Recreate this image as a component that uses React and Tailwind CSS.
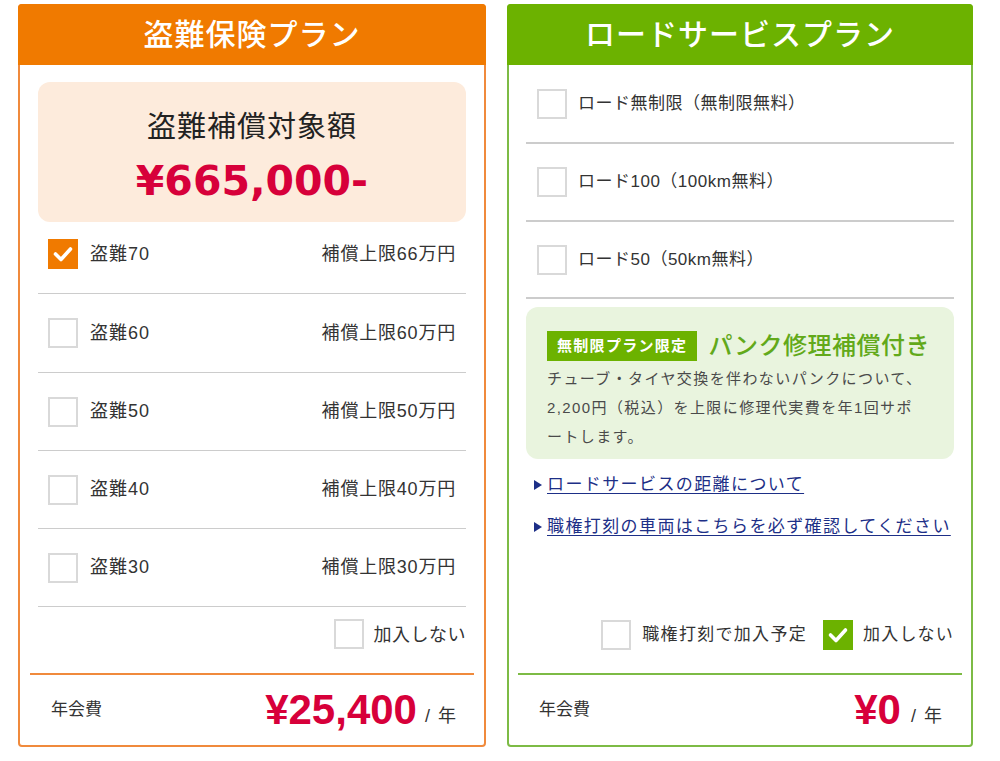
import React from "react";

const FONT = { fontFamily: '"Liberation Sans", "Noto Sans CJK JP", sans-serif' };

function Check({ checked, color }) {
  if (checked) {
    return (
      <span className={`flex h-[30px] w-[30px] shrink-0 items-center justify-center ${color}`}>
        <svg width="22" height="22" viewBox="0 0 22 22" fill="none">
          <path d="M3.5 11 L9 16.5 L18.5 6" stroke="white" strokeWidth="3.6" strokeLinecap="round" strokeLinejoin="round" />
        </svg>
      </span>
    );
  }
  return <span className="block h-[30px] w-[30px] shrink-0 border-2 border-[#d9d9d9] bg-white" />;
}

const theftRows = [
  { name: "盗難70", cap: "補償上限66万円", checked: true, h: "h-[72px] pb-[7px]" },
  { name: "盗難60", cap: "補償上限60万円", h: "h-[79px]" },
  { name: "盗難50", cap: "補償上限50万円", h: "h-[78px]" },
  { name: "盗難40", cap: "補償上限40万円", h: "h-[78px]" },
  { name: "盗難30", cap: "補償上限30万円", h: "h-[78px]" },
];

const roadRows = [
  { t: "ロード無制限（無制限無料）", h: "h-[79px]" },
  { t: "ロード100（100km無料）", h: "h-[78px]" },
  { t: "ロード50（50km無料）", h: "h-[77px]" },
];

export default function App() {
  return (
    <div className="flex h-[761px] w-[1000px] gap-[21px] bg-white pl-[18px] pt-[4px] text-[#333]" style={FONT}>
      {/* Left card */}
      <div className="flex h-[743px] w-[468px] flex-col rounded-[4px] border-2 border-[#f08a3c]">
        <div className="-mx-[2px] -mt-[2px] flex h-[61px] shrink-0 items-center justify-center rounded-t-[4px] bg-[#f07a00] text-[30px] font-medium tracking-[1px] text-white">
          盗難保険プラン
        </div>
        <div className="px-[18px] pt-[17px]">
          <div className="flex h-[140px] flex-col items-center justify-center rounded-[12px] bg-[#fdebdc] pt-[8px]">
            <div className="text-[29px] leading-[40px] tracking-[1px] text-[#222]">盗難補償対象額</div>
            <div className="mt-[10px] text-[41px] font-bold leading-[48px] text-[#d7003a]" style={{ fontFamily: '"DejaVu Sans", sans-serif' }}>
              ¥665,000-
            </div>
          </div>
          {theftRows.map((r) => (
            <div key={r.name} className={`flex items-center border-b border-[#cccccc] pl-[10px] pr-[10px] ${r.h}`}>
              <Check checked={r.checked} color="bg-[#f07a00]" />
              <span className="ml-[12px] text-[18px] tracking-[1px]">{r.name}</span>
              <span className="ml-auto text-[18px] tracking-[0.8px]">{r.cap}</span>
            </div>
          ))}
          <div className="flex h-[66px] items-start justify-end pt-[12px]">
            <Check />
            <span className="ml-[10px] mt-[3px] text-[18px] tracking-[0.5px]">加入しない</span>
          </div>
        </div>
        <div className="mx-[10px] flex flex-1 items-center border-t-2 border-[#f08a3c] pl-[21px] pr-[18px]">
          <span className="text-[17px]">年会費</span>
          <span className="ml-auto text-[42px] font-bold leading-none text-[#d7003a]">¥25,400</span>
          <span className="ml-[8px] mt-[12px] text-[18px]">/</span>
          <span className="ml-[8px] mt-[12px] text-[18px]">年</span>
        </div>
      </div>

      {/* Right card */}
      <div className="flex h-[743px] w-[466px] flex-col rounded-[4px] border-2 border-[#7dbb45]">
        <div className="-mx-[2px] -mt-[2px] flex h-[61px] shrink-0 items-center justify-center rounded-t-[4px] bg-[#6cb200] text-[30px] font-medium tracking-[1px] text-white">
          ロードサービスプラン
        </div>
        <div className="px-[17px]">
          {roadRows.map((r) => (
            <div key={r.t} className={`flex items-center border-b-2 border-[#cccccc] pl-[11px] ${r.h}`}>
              <Check />
              <span className="ml-[11px] text-[17px] tracking-[0.5px]">{r.t}</span>
            </div>
          ))}
          <div className="mt-[8px] h-[152px] rounded-[12px] bg-[#e9f4de] px-[21px] pt-[21px]">
            <div className="flex items-center">
              <span className="flex h-[30px] items-center bg-[#6cb200] px-[10px] text-[15px] font-bold tracking-[1.3px] text-white">
                無制限プラン限定
              </span>
              <span className="ml-[11px] text-[24px] font-medium tracking-[0.5px] text-[#62a91a]">パンク修理補償付き</span>
            </div>
            <div className="text-[15px] leading-[29px] tracking-[1.4px] text-[#4a4a4a]">
              チューブ・タイヤ交換を伴わないパンクについて、
              <br />
              2,200円（税込）を上限に修理代実費を年1回サポ
              <br />
              ートします。
            </div>
          </div>
          <div className="mt-[14px] flex flex-col gap-[18px] pl-[8px]">
            {["ロードサービスの距離について", "職権打刻の車両はこちらを必ず確認してください"].map((t) => (
              <div key={t} className="flex items-center text-[17px] leading-[24px] tracking-[1.4px] text-[#1d2f87]">
                <svg width="8" height="10" viewBox="0 0 8 10" className="mr-[5px] shrink-0">
                  <path d="M0 0 L8 5 L0 10 Z" fill="#1d2f87" />
                </svg>
                <span className="underline underline-offset-[3px]">{t}</span>
              </div>
            ))}
          </div>
          <div className="mt-[81px] flex h-[30px] items-center justify-end">
            <Check />
            <span className="ml-[11px] text-[17px] tracking-[1.3px]">職権打刻で加入予定</span>
            <span className="ml-[16px]">
              <Check checked color="bg-[#6cb200]" />
            </span>
            <span className="ml-[10px] text-[17px] tracking-[1.2px]">加入しない</span>
          </div>
        </div>
        <div className="mx-[9px] mt-[23px] flex flex-1 items-center border-t-2 border-[#7dbb45] pl-[21px] pr-[20px]">
          <span className="text-[17px]">年会費</span>
          <span className="ml-auto text-[42px] font-bold leading-none text-[#d7003a]">¥0</span>
          <span className="ml-[10px] mt-[12px] text-[18px]">/</span>
          <span className="ml-[8px] mt-[12px] text-[18px]">年</span>
        </div>
      </div>
    </div>
  );
}
